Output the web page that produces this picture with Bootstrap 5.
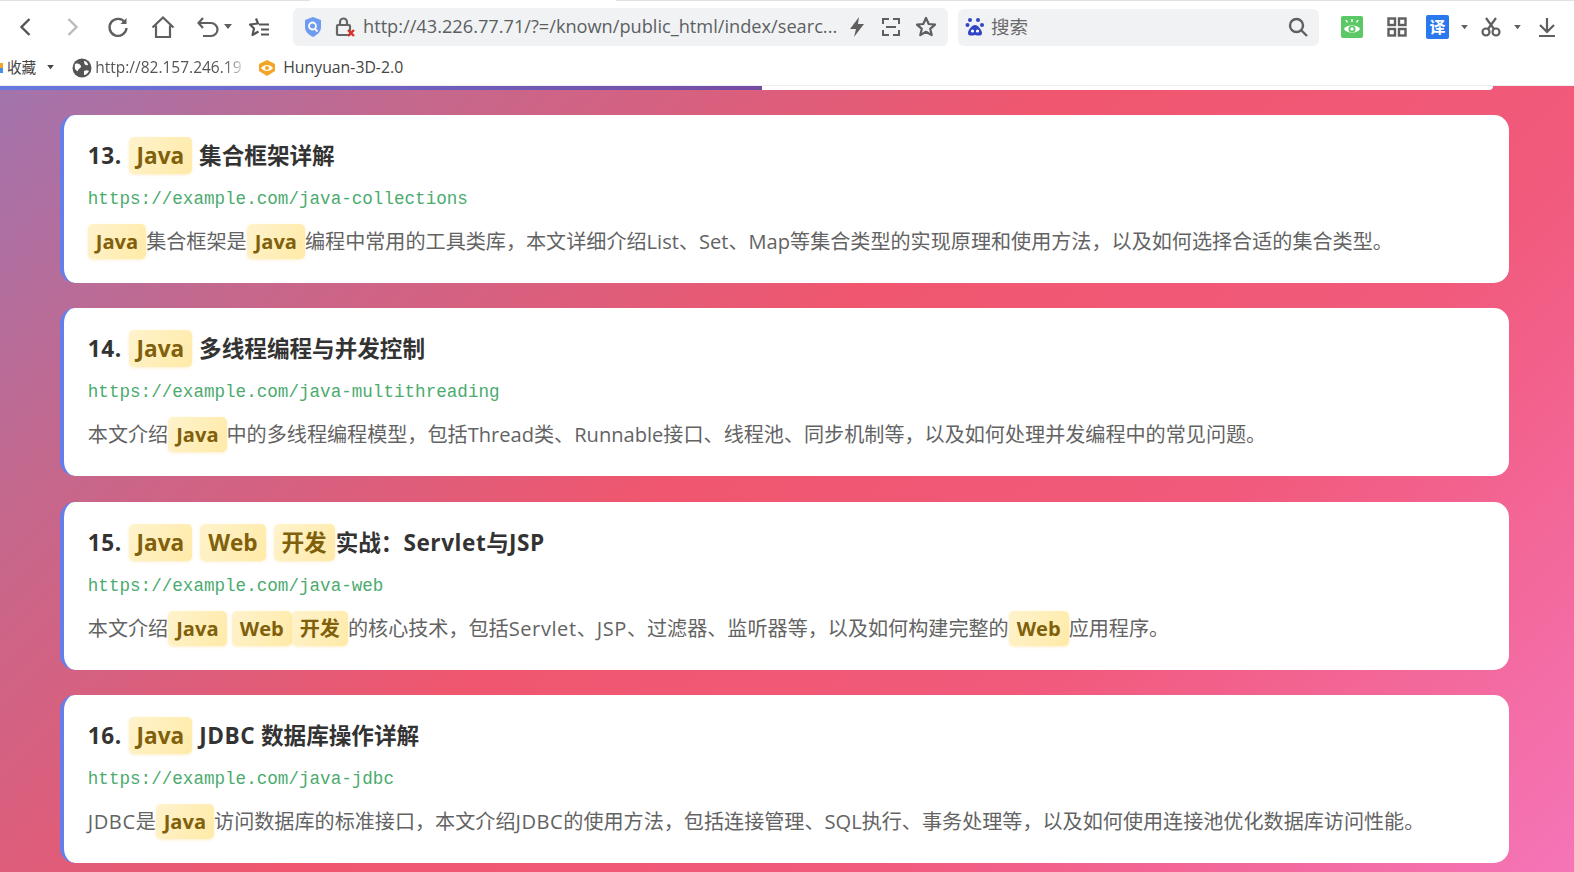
<!DOCTYPE html>
<html lang="zh-CN">
<head>
<meta charset="utf-8">
<title>Java 搜索结果</title>
<link href="https://cdn.jsdelivr.net/npm/bootstrap@5.3.0/dist/css/bootstrap.min.css" rel="stylesheet">
<style>
html,body{height:872px;overflow:hidden}
body{font-family:"Open Sans","Noto Sans CJK SC",sans-serif;background:#fff}
.shell{height:872px}
.chrome{height:86px;flex:none;background:#fff;color:#5f5f5f;border-bottom:1px solid #eceef0;position:relative}
.tabline{position:absolute;top:0;height:1px;background:#dfe2e5}
.tabline-a{left:0;width:310px}.tabline-b{left:616px;right:0}
.toolbar{height:46px;padding-top:8px}
.tool{flex:none;display:block}
.addr{background:#f1f2f4;border-radius:6px;height:38px;width:655px;padding:0 9px 0 10px;flex:none}
.addr-url{font-size:18.2px;color:#5c5f62;white-space:nowrap;margin-left:6px;width:479px}
.searchbox{background:#f1f2f4;border-radius:6px;height:37px;width:361px;margin-left:10px;padding:0 10px 0 7px;flex:none}
.searchbox-label{font-size:18.5px;color:#6a6a6a;margin-left:6px}
.toolgroup{margin-left:22px;width:240px;flex:none}
.favbar{height:32px;padding-top:11px;font-size:15.8px;color:#444}
.fav-edge{width:3px;height:10px;background:linear-gradient(#f3a526 50%,#4a8df0 50%);flex:none}
.fav-folder{font-size:14.6px;margin-left:4px}
.fav-fade{width:148px;font-size:15.5px;white-space:nowrap;color:#555;-webkit-mask-image:linear-gradient(90deg,#000 88%,rgba(0,0,0,.2));mask-image:linear-gradient(90deg,#000 88%,rgba(0,0,0,.2))}
.page{flex:1;position:relative;overflow:hidden;background:linear-gradient(135deg,#a274ad 0%,#c4688d 18%,#f0566e 45%,#f15a7c 70%,#f575b8 100%);padding:0 65px 0 60px}
.progressline{position:absolute;left:0;top:0;height:4px;width:762px;background:linear-gradient(90deg,#6779e0,#764ba2);z-index:2}
.cardtail{height:4px;background:#fff;border-radius:0 0 14px 14px;margin-bottom:24.7px;margin-right:16px}
.hit{border:0;border-left:4.5px solid #667eea;border-radius:15px;height:168px;margin-bottom:25.6px;padding:22px 22px 0 23.8px;background:#fff}
.hit-title{font-family:"Open Sans","Noto Sans CJK SC",sans-serif;font-size:22.6px;font-weight:700;color:#333;line-height:38px;margin:0 0 12px;white-space:nowrap}
.lat{letter-spacing:.55px}
.hit-url{font-family:"Liberation Mono",monospace;font-size:17.6px;color:#4bab6e;line-height:24px;margin-bottom:12px}
.hit-text{font-size:20.1px;color:#636363;line-height:38px;margin:0;white-space:nowrap}
.hl{background:linear-gradient(120deg,#fff3cd,#ffeaa7);color:#7f600c;font-weight:700;border-radius:5px;padding:4px 8px;box-shadow:0 1px 3px rgba(255,210,110,.35)}
.hit-title .hl{padding:3px 8px;margin:0 1px}
</style>
</head>
<body>
<div class="shell d-flex flex-column">
  <header class="chrome">
    <div class="tabline tabline-a"></div><div class="tabline tabline-b"></div>
    <div class="toolbar d-flex align-items-center">
      <div class="d-flex align-items-center" style="width:293px;flex:none">
        <svg class="tool" style="margin-left:15px" width="22" height="24" viewBox="0 0 22 24" fill="none" stroke="#555" stroke-width="2.4"><path d="M14.500 4 6.500 12l8 8"/></svg>
        <svg class="tool" style="margin-left:24px" width="22" height="24" viewBox="0 0 22 24" fill="none" stroke="#bbb" stroke-width="2.4"><path d="M7.500 4l8 8-8 8"/></svg>
        <svg class="tool" style="margin-left:23px" width="24" height="24" viewBox="0 0 24 24" fill="none" stroke="#5f5f5f" stroke-width="2.400"><path d="M19 7.500A8.500 8.500 0 1 0 20.500 13"/><path d="M20.500 3v6h-6" fill="#5f5f5f" stroke="none"/></svg>
        <svg class="tool" style="margin-left:20px" width="26" height="24" viewBox="0 0 26 24" fill="none" stroke="#5f5f5f" stroke-width="2.200"><path d="M2.500 12.500 13 2.500l10.500 10M6 10.500V22h14V10.500"/></svg>
        <svg class="tool" style="margin-left:20px" width="26" height="24" viewBox="0 0 26 24" fill="none" stroke="#5f5f5f" stroke-width="2.200"><path d="M7 3 2.500 8 7 13M3 8h12a6 6 0 0 1 0 13H7"/></svg>
        <svg class="tool" style="margin-left:2px" width="8" height="6" viewBox="0 0 8 6"><path d="M0 0h8L4 5z" fill="#5f5f5f"/></svg>
        <svg class="tool" style="margin-left:15px" width="24" height="24" viewBox="0 0 24 24" fill="none" stroke="#555" stroke-width="2.200" stroke-linejoin="round"><path d="M9 3.500 11 8.500 3 9.500l4 4-1.500 6.500 6-3.500"/><path d="M12 9.500h10M14 14.500h8M14 19.500h8"/></svg>
      </div>
      <div class="addr d-flex align-items-center">
        <svg class="tool" width="20" height="22" viewBox="0 0 20 22"><path d="M10 1l8 3v7c0 5-4 8-8 10-4-2-8-5-8-10V4z" fill="#6f9cf0"/><circle cx="9.500" cy="10" r="3.500" fill="none" stroke="#fff" stroke-width="1.800"/><path d="M12 13l2.500 2.500" stroke="#fff" stroke-width="1.800"/></svg>
        <svg class="tool" style="margin-left:12px" width="22" height="24" viewBox="0 0 22 24" fill="none"><rect x="2" y="10" width="13" height="10" rx="1" stroke="#666" stroke-width="2.200"/><path d="M5 10V7a3.500 3.500 0 0 1 7 0v3" stroke="#666" stroke-width="2.200"/><path d="M13 15l6 6m0-6-6 6" stroke="#d9312b" stroke-width="2.400"/></svg>
        <div class="addr-url">http://43.226.77.71/?=/known/public_html/index/searc...</div>
        <svg class="tool" style="margin-left:6px" width="18" height="24" viewBox="0 0 18 24"><path d="M11 2 2 14h6l-2 8 10-13h-6z" fill="#5f5f5f"/></svg>
        <svg class="tool" style="margin-left:15px" width="20" height="20" viewBox="0 0 20 20" fill="none" stroke="#5f5f5f" stroke-width="2"><path d="M2 7V2h6M12 2h6v5M2 13v5h6M12 18h6v-5M5 10h10"/></svg>
        <svg class="tool" style="margin-left:14px" width="22" height="22" viewBox="0 0 22 22" fill="none" stroke="#5f5f5f" stroke-width="2.200" stroke-linejoin="round"><path d="m11 2 2.700 6 6.300.6-4.800 4.200 1.500 6.300L11 15.800 5.300 19.100l1.500-6.300L2 8.600 8.300 8z"/></svg>
      </div>
      <div class="searchbox d-flex align-items-center">
        <svg class="tool" width="20" height="22" viewBox="0 0 20 22" fill="#3245c7"><circle cx="5" cy="4" r="2"/><circle cx="13" cy="4" r="2"/><circle cx="2.500" cy="9" r="2"/><circle cx="17" cy="9" r="2"/><path d="M10 9c-3 0-7 5-7 8 0 3 3 3 7 2 4 1 7 1 7-2 0-3-4-8-7-8z"/><circle cx="7.500" cy="15" r="1.600" fill="#fff"/><circle cx="12.500" cy="15" r="1.600" fill="#fff"/></svg>
        <span class="searchbox-label flex-grow-1">搜索</span>
        <svg class="tool" width="22" height="22" viewBox="0 0 22 22" fill="none" stroke="#5f5f5f" stroke-width="2.400"><circle cx="9.500" cy="9.500" r="6.500"/><path d="m14.500 14.500 5.500 5.500"/></svg>
      </div>
      <div class="toolgroup d-flex align-items-center">
        <svg class="tool" width="22" height="24" viewBox="0 0 22 24"><rect x="0" y="1" width="22" height="22" rx="2" fill="#5ac864"/><path d="M3 14c3-5 13-5 16 0-3 5-13 5-16 0z" fill="#fff"/><circle cx="11" cy="14" r="2.600" fill="none" stroke="#5ac864" stroke-width="1.800"/><path d="M11 4v3M5 5l1.500 2.500M17 5l-1.500 2.500" stroke="#fff" stroke-width="1.400"/></svg>
        <svg class="tool" style="margin-left:24px" width="20" height="20" viewBox="0 0 20 20" fill="none" stroke="#5f5f5f" stroke-width="2.400"><rect x="1.500" y="1.500" width="6.500" height="6.500"/><rect x="12" y="1.500" width="6.500" height="6.500"/><rect x="1.500" y="12" width="6.500" height="6.500"/><rect x="12" y="12" width="6.500" height="6.500"/></svg>
        <span class="tool text-center text-white fw-bold" style="margin-left:19px;width:23px;height:24px;background:#2a78ee;border-radius:2px;font-size:16px;line-height:24px">译</span>
        <svg class="tool" style="margin-left:12px" width="7" height="5" viewBox="0 0 8 6"><path d="M0 0h8L4 5z" fill="#5f5f5f"/></svg>
        <svg class="tool" style="margin-left:13px" width="20" height="22" viewBox="0 0 20 22" fill="none" stroke="#5f5f5f" stroke-width="2.200"><circle cx="5" cy="16" r="3.500"/><circle cx="15" cy="16" r="3.500"/><path d="M7 13 15 2M13 13 5 2"/></svg>
        <svg class="tool" style="margin-left:13px" width="7" height="5" viewBox="0 0 8 6"><path d="M0 0h8L4 5z" fill="#5f5f5f"/></svg>
        <svg class="tool" style="margin-left:16px" width="20" height="22" viewBox="0 0 20 22" fill="none" stroke="#5f5f5f" stroke-width="2.200"><path d="M10 2v13M3 9l7 7 7-7M2 20h16"/></svg>
      </div>
    </div>
    <div class="favbar d-flex align-items-center">
      <span class="fav-edge"></span>
      <span class="fav-folder">收藏</span>
      <svg class="tool" style="margin-left:11px" width="7" height="5" viewBox="0 0 8 6"><path d="M0 0h8L4 5z" fill="#444"/></svg>
      <svg class="tool" style="margin-left:18px" width="20" height="20" viewBox="0 0 20 20"><circle cx="10" cy="10" r="9.500" fill="#555"/><path d="M3 6c3-1 5 0 6 2 0 3-3 2-3 5-2 0-4-2-3-7zM12 3c2 0 4 2 4 4-2 1-4 0-4-4zM12 13c2-1 4-1 5 0-1 2-3 4-5 4z" fill="#fff"/></svg>
      <div class="fav-fade" style="margin-left:3px">http://82.157.246.19</div>
      <svg class="tool" style="margin-left:15px" width="18" height="16" viewBox="0 0 18 16"><path d="M9 0l8 4v7l-8 5-8-5V4z" fill="#f3a526"/><path d="M3 8c3-4 9-4 12 0-3 4-9 4-12 0z" fill="#fff"/><circle cx="9" cy="8" r="2" fill="#f3a526"/></svg>
      <span style="margin-left:7px">Hunyuan-3D-2.0</span>
    </div>
  </header>
  <main class="page">
    <div class="progressline"></div>
    <div class="cardtail"></div>

    <article class="card hit">
      <h3 class="hit-title"><span class="lat">13.</span> <span class="hl">Java</span> 集合框架详解</h3>
      <div class="hit-url">https://example.com/java-collections</div>
      <p class="hit-text"><span class="hl">Java</span>集合框架是<span class="hl">Java</span>编程中常用的工具类库，本文详细介绍List、Set、Map等集合类型的实现原理和使用方法，以及如何选择合适的集合类型。</p>
    </article>

    <article class="card hit">
      <h3 class="hit-title"><span class="lat">14.</span> <span class="hl">Java</span> 多线程编程与并发控制</h3>
      <div class="hit-url">https://example.com/java-multithreading</div>
      <p class="hit-text">本文介绍<span class="hl">Java</span>中的多线程编程模型，包括Thread类、Runnable接口、线程池、同步机制等，以及如何处理并发编程中的常见问题。</p>
    </article>

    <article class="card hit">
      <h3 class="hit-title"><span class="lat">15.</span> <span class="hl">Java</span> <span class="hl">Web</span> <span class="hl">开发</span>实战：<span class="lat">Servlet</span>与<span class="lat">JSP</span></h3>
      <div class="hit-url">https://example.com/java-web</div>
      <p class="hit-text">本文介绍<span class="hl">Java</span> <span class="hl">Web</span><span class="hl">开发</span>的核心技术，包括<span class="lat">Servlet</span>、<span class="lat">JSP</span>、过滤器、监听器等，以及如何构建完整的<span class="hl">Web</span>应用程序。</p>
    </article>

    <article class="card hit">
      <h3 class="hit-title"><span class="lat">16.</span> <span class="hl">Java</span> <span class="lat">JDBC</span> 数据库操作详解</h3>
      <div class="hit-url">https://example.com/java-jdbc</div>
      <p class="hit-text"><span class="lat">JDBC</span>是<span class="hl">Java</span>访问数据库的标准接口，本文介绍<span class="lat">JDBC</span>的使用方法，包括连接管理、SQL执行、事务处理等，以及如何使用连接池优化数据库访问性能。</p>
    </article>
  </main>
</div>
<script src="https://cdn.jsdelivr.net/npm/bootstrap@5.3.0/dist/js/bootstrap.bundle.min.js"></script>
</body>
</html>
